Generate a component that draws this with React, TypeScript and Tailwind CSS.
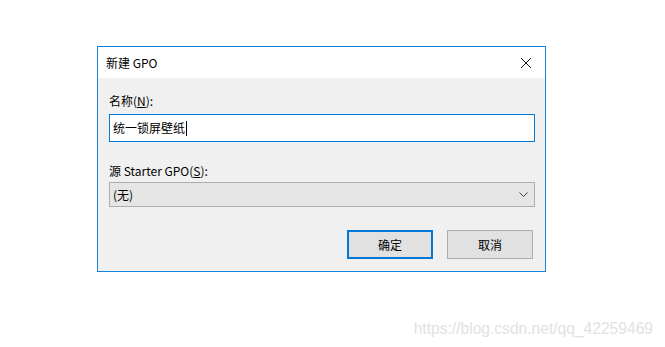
import React from "react";

const font = { fontFamily: '"Noto Sans CJK SC", "Noto Sans", sans-serif' };

const App: React.FC = () => {
  return (
    <div className="w-[665px] h-[347px] bg-white text-[12px] text-black" style={font}>
      <div className="pl-[97px] pt-[46px]">
        <div className="w-[449px] border border-[#1883d7] bg-[#f0f0f0]">
          {/* title bar */}
          <div className="h-[31px] bg-white flex items-center justify-between pl-[8px] pr-[10px]">
            <span className="text-[12px] leading-none">新建 GPO</span>
            <svg width="12" height="12" viewBox="0 0 12 12" className="mr-[3px]">
              <path d="M1 1 L11 11 M11 1 L1 11" stroke="#111" strokeWidth="1" fill="none" />
            </svg>
          </div>

          {/* body */}
          <div className="pl-[11px] pr-[10px] pt-[15px] pb-[12px] flex flex-col">
            <label className="leading-[16px]">
              名称(<span className="underline">N</span>):
            </label>
            <div className="mt-[5px] h-[28px] bg-white border border-[#0078d7] flex items-center pl-[3px]">
              <span className="leading-none">统一锁屏壁纸</span>
              <span className="w-px h-[15px] bg-black ml-px"></span>
            </div>

            <label className="mt-[21px] leading-[16px]">
              源 Starter GPO(<span className="underline">S</span>):
            </label>
            <div className="mt-[3px] h-[25px] bg-[#e5e5e5] border border-[#adadad] flex items-center justify-between pl-[3px] pr-[6px]">
              <span className="leading-none">(无)</span>
              <svg width="9" height="5" viewBox="0 0 9 5">
                <path d="M0.5 0.5 L4.5 4.5 L8.5 0.5" stroke="#444" strokeWidth="1" fill="none" />
              </svg>
            </div>

            <div className="mt-[23px] flex justify-end gap-[14px] pr-[2px]">
              <button className="w-[86px] h-[29px] bg-[#e1e1e1] border-2 border-[#0078d7] leading-none">
                确定
              </button>
              <button className="w-[86px] h-[29px] bg-[#e1e1e1] border border-[#adadad] leading-none">
                取消
              </button>
            </div>
          </div>
        </div>
      </div>

      <div className="flex justify-end pr-[12px] pt-[49px]">
        <span
          className="text-[15.6px] text-[#e2e2e2] leading-none"
          style={{ fontFamily: '"Liberation Sans", Arial, sans-serif' }}
        >
          https://blog.csdn.net/qq_42259469
        </span>
      </div>
    </div>
  );
};

export default App;
